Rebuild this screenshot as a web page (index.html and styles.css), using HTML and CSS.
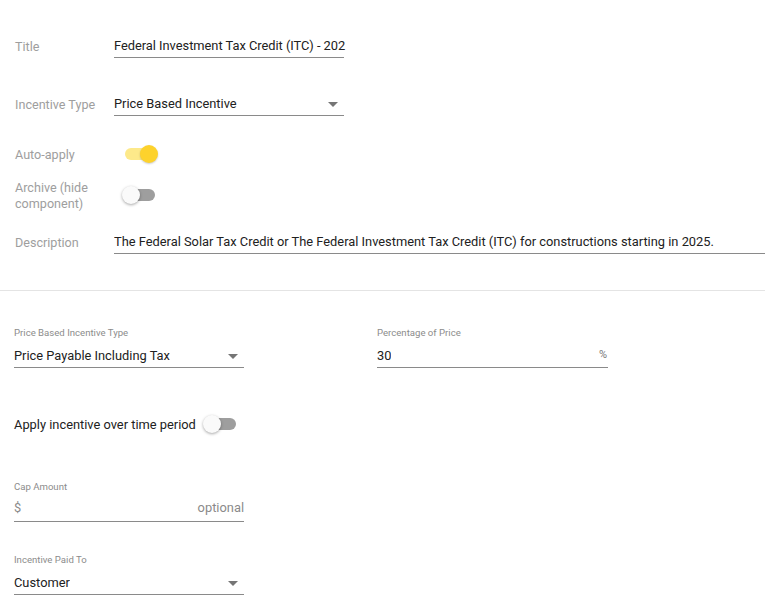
FILE: index.html
```html
<!DOCTYPE html>
<html>
<head>
<meta charset="utf-8">
<link rel="stylesheet" href="styles.css">
</head>
<body>
<div class="page">
  <section class="general">
    <div class="row row-title">
      <div class="label">Title</div>
      <div class="field field-short"><span class="value value-free">Federal Investment Tax Credit (ITC) - 202</span></div>
    </div>
    <div class="row row-type">
      <div class="label">Incentive Type</div>
      <div class="field field-short"><span class="value">Price Based Incentive</span><span class="arrow"></span></div>
    </div>
    <div class="row row-auto">
      <div class="label">Auto-apply</div>
      <div class="toggle-cell"><span class="toggle on"><span class="thumb"></span></span></div>
    </div>
    <div class="row row-archive">
      <div class="label two-line">Archive (hide component)</div>
      <div class="toggle-cell"><span class="toggle"><span class="thumb"></span></span></div>
    </div>
    <div class="row row-desc">
      <div class="label">Description</div>
      <div class="field field-long"><span class="value">The Federal Solar Tax Credit or The Federal Investment Tax Credit (ITC) for constructions starting in 2025.</span></div>
    </div>
  </section>
  <hr class="divider">
  <section class="details">
    <div class="pair">
      <div class="group">
        <div class="small-label">Price Based Incentive Type</div>
        <div class="field"><span class="value">Price Payable Including Tax</span><span class="arrow"></span></div>
      </div>
      <div class="group">
        <div class="small-label">Percentage of Price</div>
        <div class="field"><span class="value">30</span><span class="suffix">%</span></div>
      </div>
    </div>
    <div class="inline-toggle">
      <span class="inline-label">Apply incentive over time period</span>
      <span class="toggle"><span class="thumb"></span></span>
    </div>
    <div class="group group-cap">
      <div class="small-label">Cap Amount</div>
      <div class="field"><span class="prefix">$</span><span class="hint">optional</span></div>
    </div>
    <div class="group group-paid">
      <div class="small-label">Incentive Paid To</div>
      <div class="field"><span class="value">Customer</span><span class="arrow"></span></div>
    </div>
  </section>
</div>
</body>
</html>
```

FILE: styles.css
```css
* { box-sizing: border-box; }
html, body { margin: 0; padding: 0; background: #fff; }
body {
  font-family: Roboto, "Liberation Sans", Arial, sans-serif;
  color: #212121;
  width: 765px;
  height: 615px;
  overflow: hidden;
}
.general { padding: 34px 0 0 15px; }
.row { display: flex; align-items: center; }
.label {
  width: 99px;
  font-size: 12.6px;
  color: #9e9e9e;
  flex: none;
  padding-top: 1px;
}
.two-line { line-height: 16px; width: 80px; margin-right: 19px; }
.field {
  position: relative;
  height: 24px;
  border-bottom: 1px solid #8a8a8a;
  display: flex;
  align-items: center;
  font-size: 12.85px;
  line-height: 23px;
}
.field-short { width: 230px; }
.field-long { flex: 1; }
.value { white-space: nowrap; overflow: hidden; }
.value-free { overflow: visible; letter-spacing: -0.02px; }
.arrow {
  position: absolute;
  right: 6px;
  top: 10px;
  width: 0; height: 0;
  border-left: 5px solid transparent;
  border-right: 5px solid transparent;
  border-top: 5px solid #757575;
}
.row-type { margin-top: 34px; }
.row-auto { margin-top: 26px; height: 24px; }
.row-archive { margin-top: 13px; height: 32px; }
.row-desc { margin-top: 19px; }
.toggle-cell { padding-left: 11px; display: flex; align-items: center; }
.toggle {
  position: relative;
  display: inline-block;
  width: 30px;
  height: 12px;
  border-radius: 6px;
  background: #9e9e9e;
  flex: none;
}
.toggle .thumb {
  position: absolute;
  top: -3px;
  left: -3px;
  width: 18px;
  height: 18px;
  border-radius: 50%;
  background: #fafafa;
  box-shadow: 0 1px 3px rgba(0,0,0,0.35);
}
.toggle.on { background: #fde98a; }
.toggle.on .thumb { left: auto; right: -3px; background: #fdd22c; box-shadow: 0 1px 2px rgba(0,0,0,0.2); }
.divider {
  margin: 36px 0 0 0;
  border: 0;
  border-top: 1px solid #e4e4e4;
  height: 0;
}
.details { padding: 35px 0 0 14px; }
.pair { display: grid; grid-template-columns: 230px 231px; column-gap: 133px; }
.group .field { width: 230px; }
.pair .group:last-child .field { width: 231px; }
.small-label {
  font-size: 9.6px;
  line-height: 14px;
  color: #8c8c8c;
  margin-bottom: 4px;
}
.suffix {
  position: absolute;
  right: 1px;
  top: 0;
  font-size: 11px;
  color: #777;
  line-height: 21px;
}
.inline-toggle {
  margin-top: 46px;
  height: 20px;
  display: flex;
  align-items: center;
}
.inline-label { font-size: 12.85px; margin-right: 10px; }
.group-cap { margin-top: 46px; }
.group-cap .field { justify-content: space-between; padding-bottom: 5px; }
.prefix { color: #8a8a8a; font-size: 12.85px; }
.hint { color: #8a8a8a; font-size: 12.85px; }
.group-paid { margin-top: 31px; }
```
